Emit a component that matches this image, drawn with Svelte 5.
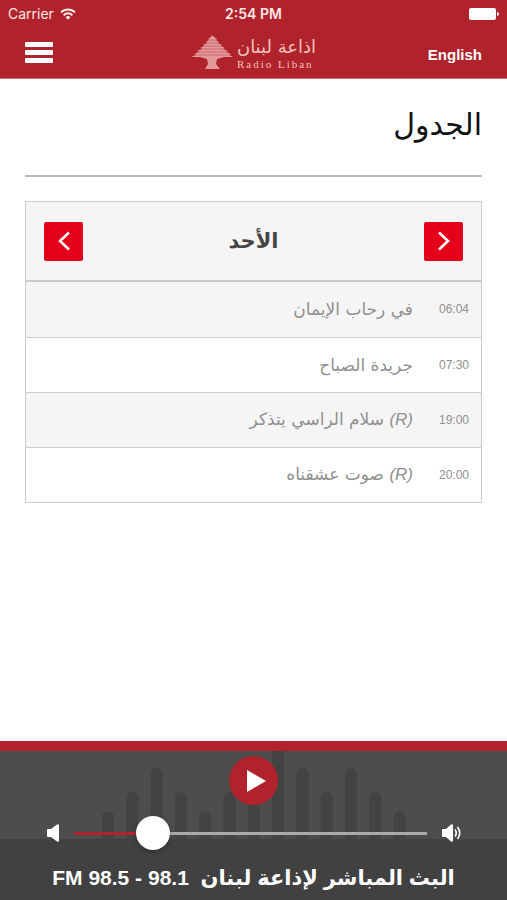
<script>
  let day = $state(0);
  let volume = $state(19.5);
  let playing = $state(false);

  const days = ["الأحد", "الإثنين", "الثلاثاء", "الأربعاء", "الخميس", "الجمعة", "السبت"];

  const shows = [
    { time: "06:04", title: "في رحاب الإيمان" },
    { time: "07:30", title: "جريدة الصباح" },
    { time: "19:00", title: "سلام الراسي يتذكر", rerun: true },
    { time: "20:00", title: "صوت عشقناه", rerun: true },
  ];

  // heights of the equalizer bars behind the player
  const bars = [28, 47, 71, 47, 28, 47, 71, 100, 71, 47, 71, 47, 28];

  function shift(step) {
    day = (day + step + days.length) % days.length;
  }
</script>

<div class="app">
  <header>
    <div class="status">
      <span class="carrier">
        Carrier
        <svg width="16" height="12" viewBox="0 0 16 12" fill="none" stroke="currentColor" stroke-width="2">
          <path d="M1 4.4a10 10 0 0 1 14 0" />
          <path d="M3.6 7.2a6.2 6.2 0 0 1 8.8 0" />
          <path d="M5.6 9.2a3.4 3.4 0 0 1 4.8 0L8 11.8z" fill="currentColor" stroke="none" />
        </svg>
      </span>
      <strong>2:54 PM</strong>
      <svg class="battery" width="30" height="12" viewBox="0 0 30 12" fill="currentColor">
        <rect width="27" height="12" rx="2" />
        <path d="M28 4q2 .5 2 2t-2 2z" />
      </svg>
    </div>

    <div class="bar">
      <button class="menu" aria-label="القائمة"><span></span><span></span><span></span></button>
      <a class="logo" href="#home">
        <svg width="42" height="35" viewBox="0 0 42 35" fill="currentColor">
          <path d="M21 0l2 2 3 2-1 1 3 2-1 1 4 2-1 1 4 2-2 1 5 2-2 1 5 2-2 1 4 2h-9l-7 2-1 5 4 5H14l3-5-1-5-7-2H0l5-2-2-1 5-2-2-1 5-2-2-1 4-2-1-1 4-2-1-1 3-2-1-1 3-2z" opacity=".75" />
          <path d="M16 5h11M14 8h15M11 11h20M9 14h24M7 17h29M4 20h34" stroke="#b0222c" stroke-width=".4" />
        </svg>
        <span class="name">
          <span class="name-ar" dir="rtl">اذاعة لبنان</span>
          <span class="name-en">Radio Liban</span>
        </span>
      </a>
      <a class="lang" href="#en" lang="en">English</a>
    </div>
  </header>

  <main dir="rtl" lang="ar">
    <h1>الجدول</h1>

    <section class="schedule">
      <div class="day">
        <button aria-label="اليوم السابق" onclick={() => shift(-1)}>
          <svg width="14" height="20" viewBox="0 0 14 20"><path d="M2 1.500l9 8.500-9 8.500" /></svg>
        </button>
        <h2>{days[day]}</h2>
        <button aria-label="اليوم التالي" onclick={() => shift(1)}>
          <svg width="14" height="20" viewBox="0 0 14 20"><path d="M12 1.500l-9 8.500 9 8.500" /></svg>
        </button>
      </div>

      <table>
        <tbody>
          {#each shows as show}
            <tr>
              <th scope="row">{show.time}</th>
              <td>{#if show.rerun}<em dir="ltr">(R)</em>{" "}{/if}{show.title}</td>
            </tr>
          {/each}
        </tbody>
      </table>
    </section>
  </main>

  <footer>
    <svg class="wave" width="304" height="88" viewBox="0 0 304 88">
      {#each bars as height, i}
        <rect x={i * 24.3} y={88 - height} width="12" height={height + 8} rx="6" />
      {/each}
    </svg>

    <button class="play" aria-label="تشغيل" aria-pressed={playing} onclick={() => (playing = !playing)}>
      <svg width="20" height="22" viewBox="0 0 20 22" fill="currentColor"><path d="M1 0l19 11L1 22z" /></svg>
    </button>

    <div class="volume">
      <svg width="12" height="18" viewBox="0 0 12 18" fill="currentColor"><path d="M1 5h3l6-4.500q2-1 2 1v15q0 2-2 1L4 13H1q-1 0-1-1V6q0-1 1-1z" /></svg>
      <input type="range" min="0" max="100" step="any" aria-label="مستوى الصوت" bind:value={volume} style:--level="{volume}%" />
      <svg width="20" height="18" viewBox="0 0 20 18" fill="currentColor">
        <path d="M1 5h3l5-4.500q2-1 2 1v15q0 2-2 1L4 13H1q-1 0-1-1V6q0-1 1-1z" />
        <path d="M13 5.500q2.500 3.500 0 7M15.500 3q4.500 6 0 12" fill="none" stroke="currentColor" stroke-width="1.600" />
      </svg>
    </div>

    <p dir="rtl" lang="ar">البث المباشر لإذاعة لبنان&nbsp; 98.1 - 98.5 FM</p>
  </footer>
</div>

<style>
  :global(body) {
    margin: 0;
    background: #fff;
  }

  .app {
    --brand: #b0222c;
    --line: #ccc;

    min-height: 100vh;
    display: flex;
    flex-direction: column;
    font-family: "Liberation Sans", "DejaVu Sans", sans-serif;
  }

  button {
    border: 0;
    padding: 0;
    color: #fff;
    cursor: pointer;
  }

  svg {
    display: block;
  }

  header {
    border-bottom: 1px solid #d0747b;
    background: var(--brand);
    color: #fff;
  }

  .status {
    display: grid;
    grid-template-columns: 1fr auto 1fr;
    align-items: center;
    height: 27px;
    padding: 0 8px;
    font: 14px Inter, sans-serif;
    color: #ffe9e4;

    strong {
      font-weight: 600;
    }
  }

  .carrier {
    display: flex;
    align-items: center;
    gap: 6px;
  }

  .battery {
    justify-self: end;
    color: #fff;
  }

  .bar {
    display: grid;
    grid-template-columns: 1fr auto 1fr;
    align-items: center;
    height: 51px;
    padding: 0 25px;
  }

  .menu {
    display: grid;
    gap: 3px;
    width: 28px;
    background: none;

    span {
      height: 5px;
      border-radius: 1px;
      background: #fff;
    }
  }

  .logo {
    display: flex;
    gap: 4px;
    color: #f3c3bd;
    text-decoration: none;
  }

  .name {
    display: flex;
    flex-direction: column;
  }

  .name-ar {
    font: 18px/24px "DejaVu Sans", sans-serif;
  }

  .name-en {
    font: 11px/10px "Liberation Serif", serif;
    letter-spacing: 2px;
  }

  .lang {
    justify-self: end;
    padding-top: 4px;
    font-size: 15px;
    font-weight: bold;
    color: #fff;
    text-decoration: none;
  }

  main {
    flex: 1;
    padding: 0 25px 24px;
  }

  h1 {
    margin: 0 0 24px;
    height: 96px;
    border-bottom: 2px solid #bbb;
    font: 30px/92px "DejaVu Sans", sans-serif;
    color: #111;
  }

  .schedule {
    border: 1px solid var(--line);
  }

  .day {
    display: flex;
    align-items: center;
    justify-content: space-between;
    height: 78px;
    padding: 0 18px;
    border-bottom: 2px solid var(--line);
    background: #f5f5f5;

    button {
      display: grid;
      place-items: center;
      width: 39px;
      height: 39px;
      border-radius: 2px;
      background: #e3001b;
    }

    path {
      fill: none;
      stroke: #fff;
      stroke-width: 2.5;
    }
  }

  h2 {
    margin: 0;
    font: bold 21px "DejaVu Sans", sans-serif;
    color: #444;
  }

  table {
    width: 100%;
    border-collapse: collapse;
    color: #909090;
  }

  tr {
    height: 55px;

    &:nth-child(odd) {
      background: #f5f5f5;
    }

    & + tr {
      border-top: 1px solid var(--line);
    }
  }

  th {
    width: 44px;
    padding: 0 12px 0 0;
    font-size: 12px;
    font-weight: normal;
    text-align: start;
  }

  td {
    padding: 0 12px;
    font: 17px "DejaVu Sans", sans-serif;
  }

  em {
    font-family: "Liberation Sans", sans-serif;
  }

  footer {
    position: relative;
    display: flex;
    flex-direction: column;
    align-items: center;
    border-top: 10px solid var(--brand);
    background: linear-gradient(#4d4d4d 88px, #414141 88px);
    color: #fff;
  }

  .wave {
    position: absolute;
    top: 0;
    left: 50%;
    translate: -50%;
    fill: #434343;
  }

  .play {
    position: relative;
    display: grid;
    place-items: center;
    width: 49px;
    height: 49px;
    margin-top: 5px;
    padding-left: 4px;
    border-radius: 50%;
    background: var(--brand);
  }

  .volume {
    position: relative;
    display: flex;
    align-items: center;
    gap: 15px;
    box-sizing: border-box;
    width: 100%;
    margin-top: 11px;
    padding: 0 45px 0 47px;
  }

  input {
    flex: 1;
    min-width: 0;
    height: 34px;
    margin: 0;
    appearance: none;
    background: linear-gradient(to right, var(--brand) var(--level), #aaa var(--level)) center / 100% 3px no-repeat;

    &::-webkit-slider-thumb {
      appearance: none;
      width: 34px;
      height: 34px;
      border-radius: 50%;
      background: #fff;
      box-shadow: 0 2px 4px rgb(0 0 0 / 0.3);
    }
  }

  p {
    margin: 0;
    padding: 12px 0 6px;
    font-size: 21px;
    font-weight: bold;
    line-height: 32px;
  }
</style>
